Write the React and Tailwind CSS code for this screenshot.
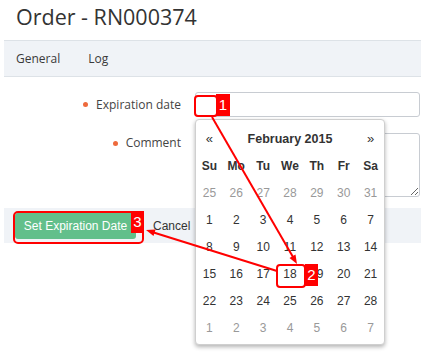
const old = (a) => a.map((d) => ({ d, o: true }));
const cur = (a) => a.map((d) => ({ d, o: false }));
const weeks = [
  old([25, 26, 27, 28, 29, 30, 31]),
  cur([1, 2, 3, 4, 5, 6, 7]),
  cur([8, 9, 10, 11, 12, 13, 14]),
  cur([15, 16, 17, 18, 19, 20, 21]),
  cur([22, 23, 24, 25, 26, 27, 28]),
  old([1, 2, 3, 4, 5, 6, 7]),
];
const dows = ["Su", "Mo", "Tu", "We", "Th", "Fr", "Sa"];

export default function App() {
  return (
    <div className="relative w-[425px] h-[358px] overflow-hidden bg-white font-['Open_Sans',sans-serif] text-[#333]">
      <h1 className="h-[40px] pl-4 pt-[2px] text-[21.5px] leading-[30px] font-normal text-[#333]">
        Order - RN000374
      </h1>
      <div className="mx-1 flex h-[37px] items-center gap-[28px] border-y border-[#dde2e7] bg-[#f0f3f7] pl-3 text-[12px] text-[#3a3a3a]">
        <span>General</span>
        <span>Log</span>
      </div>

      <div className="flex flex-col gap-4 pt-[15px]">
        <div className="flex items-center">
          <div className="flex w-[181px] items-center justify-end text-[12px] text-[#444]">
            <span className="mr-[8px] h-[5px] w-[5px] rounded-full bg-[#ee6a3c]" />
            <span>Expiration date</span>
          </div>
          <div className="ml-[14px] h-[25px] w-[225px] rounded-[3px] border border-[#c8ccd2] bg-white" />
        </div>
        <div className="flex items-start">
          <div className="flex h-[20px] w-[181px] items-center justify-end text-[12px] text-[#444]">
            <span className="mr-[8px] h-[5px] w-[5px] rounded-full bg-[#ee6a3c]" />
            <span>Comment</span>
          </div>
          <textarea
            readOnly
            className="ml-[14px] h-[64px] w-[225px] resize-y rounded-[3px] border border-[#c8ccd2] bg-white"
          />
        </div>
      </div>

      <div className="mx-1 mt-[11px] flex h-[35px] items-center bg-[#f0f3f7] pl-[11px] font-['Liberation_Sans',Arial,sans-serif] text-[12px]">
        <button className="h-[26px] w-[121px] rounded-[3px] bg-[#62bf8b] text-white">
          Set Expiration Date
        </button>
        <span className="ml-[17px] text-[#333]">Cancel</span>
      </div>

      {/* datepicker popup */}
      <div className="absolute left-[195px] top-[119px] h-[226px] w-[190px] rounded-[4px] border border-[#cfcfcf] bg-white pt-[6px] font-['Liberation_Sans',Arial,sans-serif] text-[12px] text-[#333] shadow-[0_2px_4px_rgba(0,0,0,0.3)]">
        <div className="grid h-[26px] grid-cols-7 items-center text-center">
          <span className="text-[13px]">«</span>
          <span className="col-span-5 text-[12.5px] font-bold">February 2015</span>
          <span className="text-[13px]">»</span>
        </div>
        <div className="grid h-[27px] grid-cols-7 items-center text-center font-bold">
          {dows.map((d) => (
            <span key={d}>{d}</span>
          ))}
        </div>
        {weeks.map((w, i) => (
          <div key={i} className="grid h-[27px] grid-cols-7 items-center text-center">
            {w.map((c, j) => (
              <span key={j} className={c.o ? "text-[#999]" : "text-[#333]"}>
                {c.d}
              </span>
            ))}
          </div>
        ))}
      </div>

      {/* annotations */}
      <svg className="pointer-events-none absolute inset-0" width="425" height="358" viewBox="0 0 425 358">
        <rect x="195" y="96" width="22" height="20" rx="3" fill="none" stroke="#ff0000" strokeWidth="2" />
        <rect x="277" y="265" width="28" height="22" rx="3" fill="none" stroke="#ff0000" strokeWidth="2" />
        <rect x="14" y="212" width="129" height="31" rx="4" fill="none" stroke="#ff0000" strokeWidth="2" />
        <line x1="212" y1="117" x2="293" y2="257" stroke="#ff0000" strokeWidth="2" />
        <polygon points="297,264 289.5,258 295.5,254.5" fill="#ff0000" />
        <line x1="277" y1="271" x2="152" y2="232" stroke="#ff0000" strokeWidth="2" />
        <polygon points="146,230 155.6,229.4 153.5,236.1" fill="#ff0000" />
      </svg>
      <div className="absolute left-[216px] top-[94px] flex h-[22px] w-[14px] items-center justify-center bg-[#ff0000] font-['Liberation_Sans',Arial,sans-serif] text-[15px] text-white">
        1
      </div>
      <div className="absolute left-[305px] top-[264px] flex h-[22px] w-[13px] items-center justify-center bg-[#ff0000] font-['Liberation_Sans',Arial,sans-serif] text-[15px] text-white">
        2
      </div>
      <div className="absolute left-[131px] top-[211px] flex h-[22px] w-[13px] items-center justify-center bg-[#ff0000] font-['Liberation_Sans',Arial,sans-serif] text-[15px] text-white">
        3
      </div>
    </div>
  );
}
